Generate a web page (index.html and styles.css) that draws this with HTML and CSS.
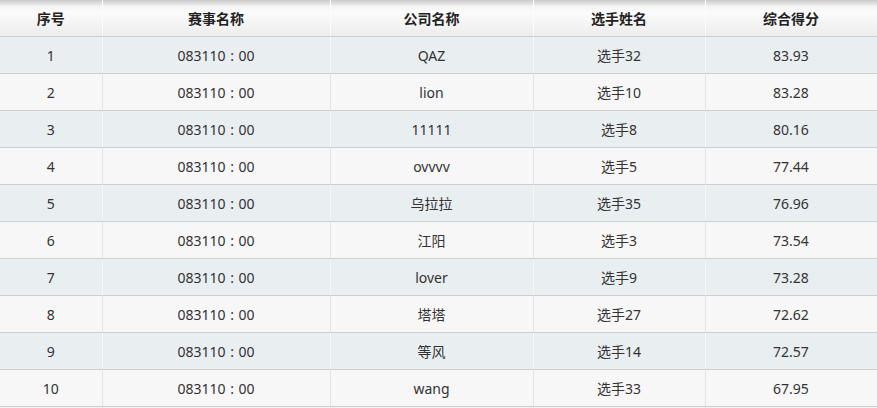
FILE: index.html
```html
<!DOCTYPE html>
<html lang="zh">
<head>
<meta charset="utf-8">
<link rel="stylesheet" href="styles.css">
</head>
<body>
<table class="rank">
  <colgroup>
    <col class="c1"><col class="c2"><col class="c3"><col class="c4"><col class="c5">
  </colgroup>
  <thead>
    <tr><th>序号</th><th>赛事名称</th><th>公司名称</th><th>选手姓名</th><th>综合得分</th></tr>
  </thead>
  <tbody>
    <tr><td>1</td><td>083110 : 00</td><td>QAZ</td><td>选手32</td><td>83.93</td></tr>
    <tr><td>2</td><td>083110 : 00</td><td>lion</td><td>选手10</td><td>83.28</td></tr>
    <tr><td>3</td><td>083110 : 00</td><td>11111</td><td>选手8</td><td>80.16</td></tr>
    <tr><td>4</td><td>083110 : 00</td><td>ovvvv</td><td>选手5</td><td>77.44</td></tr>
    <tr><td>5</td><td>083110 : 00</td><td>乌拉拉</td><td>选手35</td><td>76.96</td></tr>
    <tr><td>6</td><td>083110 : 00</td><td>江阳</td><td>选手3</td><td>73.54</td></tr>
    <tr><td>7</td><td>083110 : 00</td><td>lover</td><td>选手9</td><td>73.28</td></tr>
    <tr><td>8</td><td>083110 : 00</td><td>塔塔</td><td>选手27</td><td>72.62</td></tr>
    <tr><td>9</td><td>083110 : 00</td><td>等风</td><td>选手14</td><td>72.57</td></tr>
    <tr><td>10</td><td>083110 : 00</td><td>wang</td><td>选手33</td><td>67.95</td></tr>
  </tbody>
</table>
</body>
</html>
```
FILE: styles.css
```css
html, body {
  margin: 0;
  padding: 0;
  background: #f4f4f4;
}
.rank {
  width: 877px;
  border-collapse: collapse;
  table-layout: fixed;
  font-family: "Noto Sans", "Noto Sans CJK SC", sans-serif;
  font-size: 14px;
  color: #333;
}
.c1 { width: 102px; }
.c2 { width: 228px; }
.c3 { width: 203px; }
.c4 { width: 172px; }
.c5 { width: 172px; }
.rank th,
.rank td {
  text-align: center;
  padding: 0;
  border-bottom: 1px solid #cfcfcf;
  border-right: 1px solid #e2e2e2;
}
.rank th {
  height: 36px;
  font-weight: bold;
  color: #222;
  font-size: 14px;
  background: linear-gradient(#c9c9c9 0, #f4f4f4 18%, #fbfbfb 35%, #f3f3f3 70%, #ececec 100%);
  border-right: 1px solid #fdfdfd;
}
.rank td {
  height: 36px;
  word-spacing: 1px;
}
.rank tbody tr:nth-child(odd) td {
  background: #e9eef1;
  border-right-color: #f6f8f9;
}
.rank tbody tr:nth-child(even) td {
  background: #f7f7f7;
  border-right-color: #e4e4e4;
}
```
